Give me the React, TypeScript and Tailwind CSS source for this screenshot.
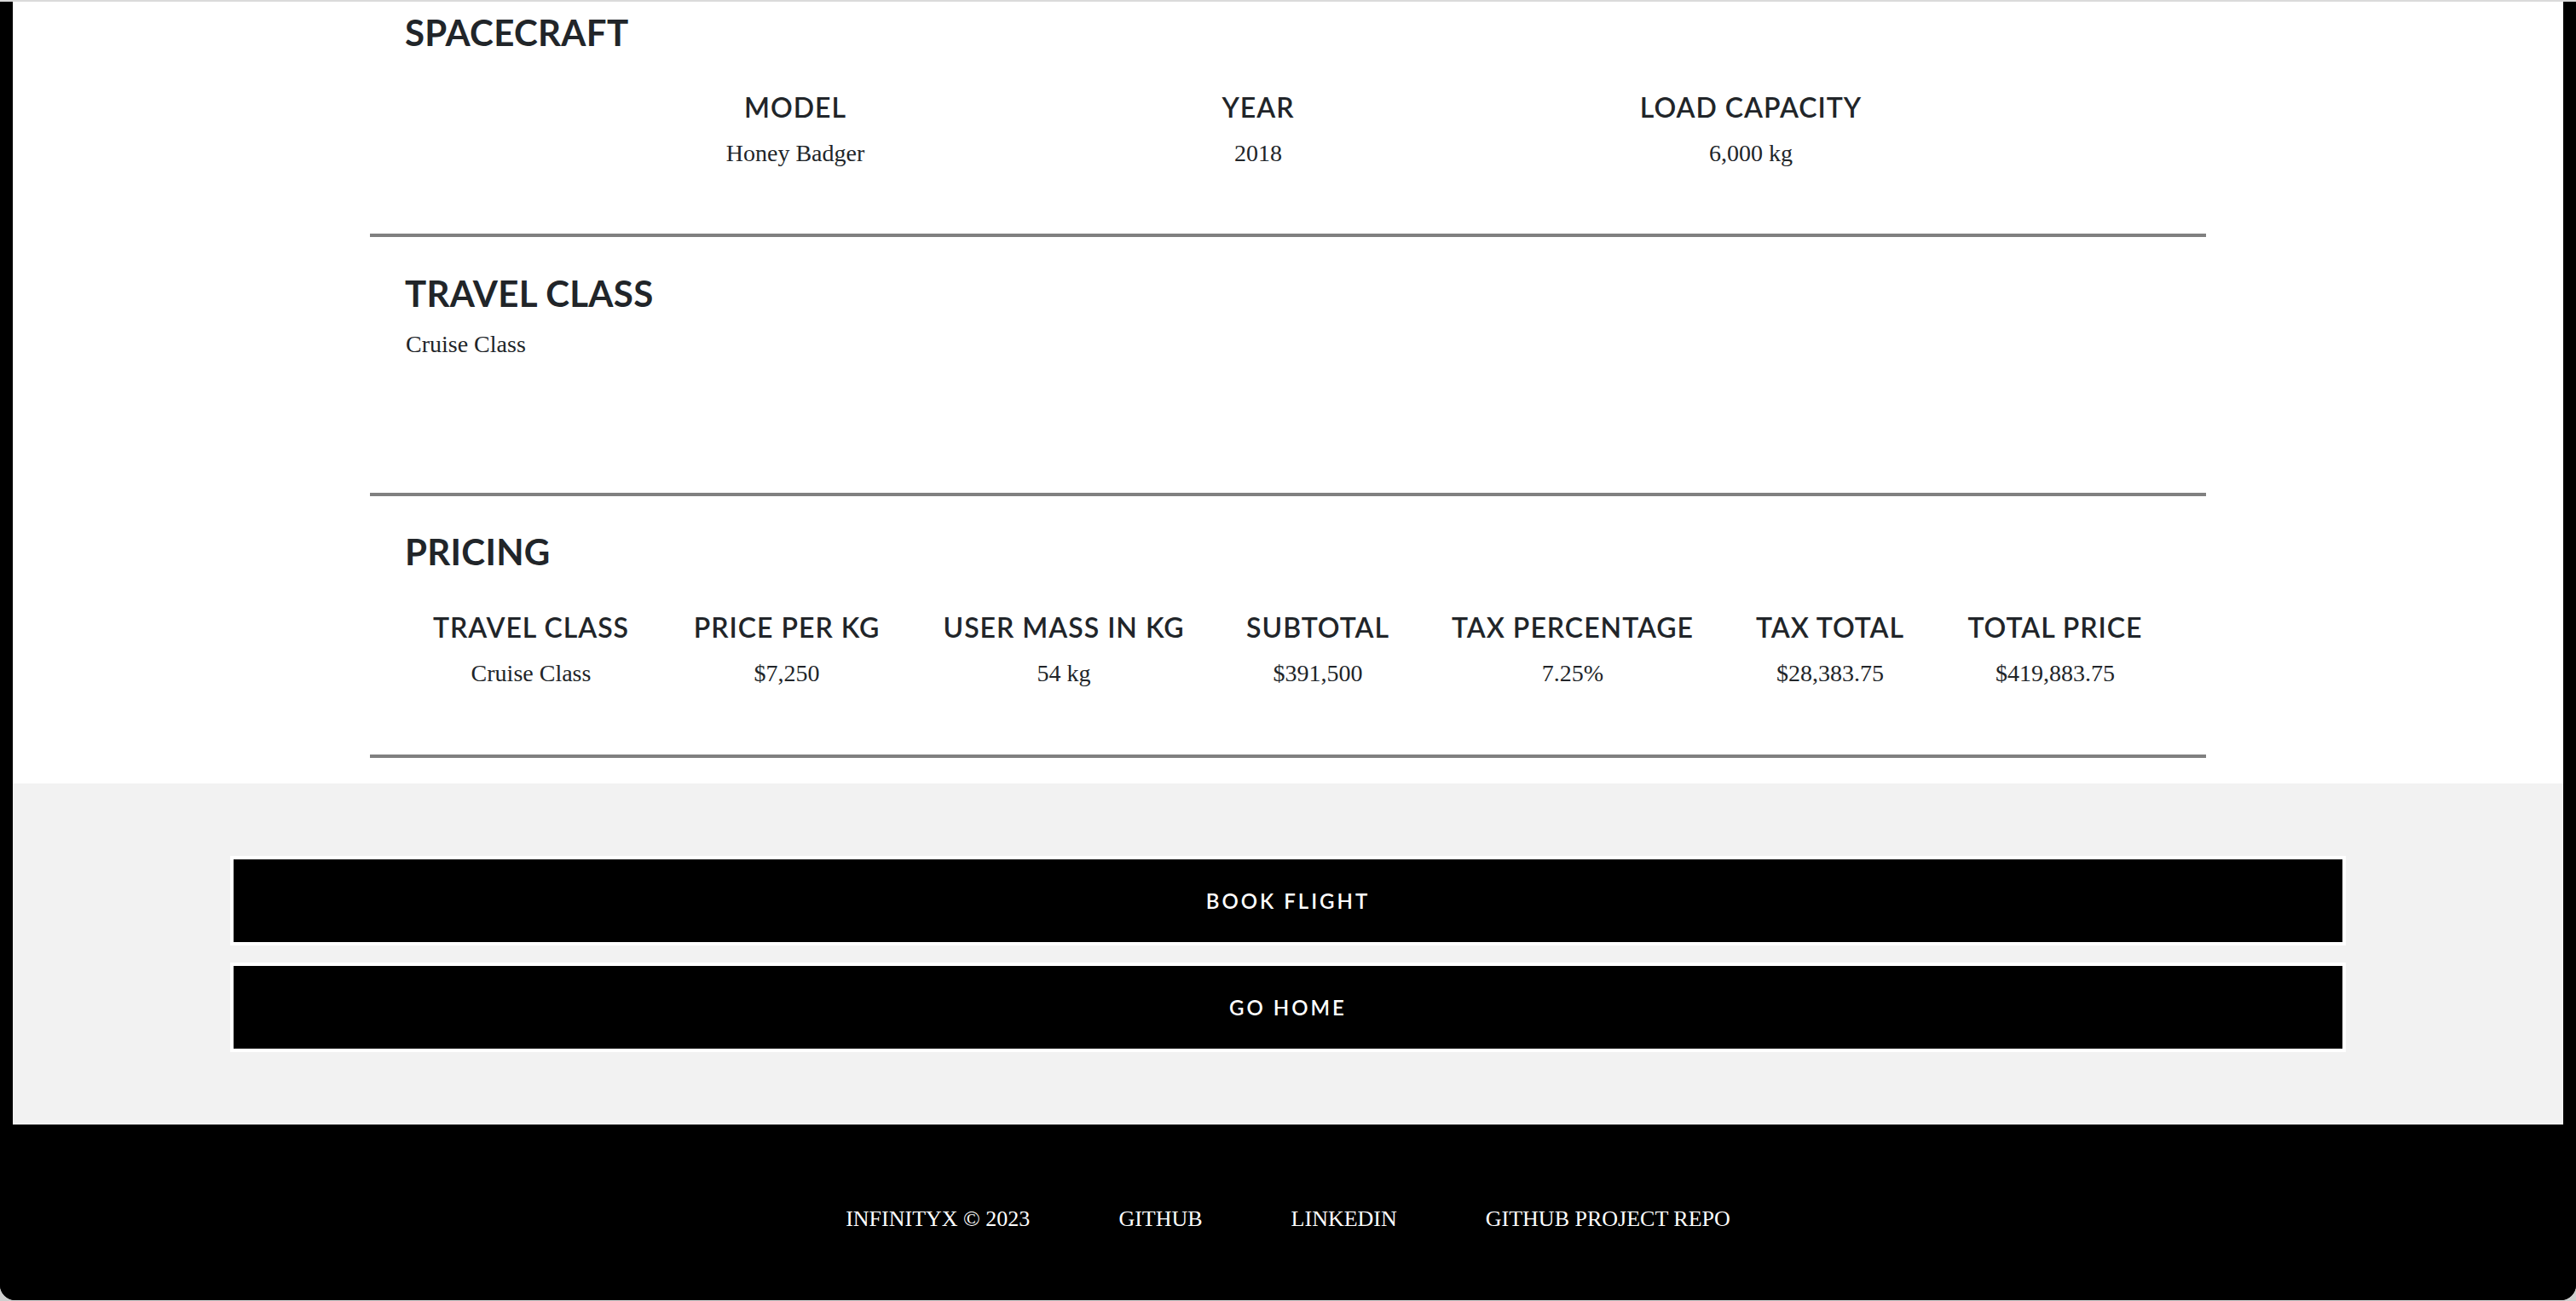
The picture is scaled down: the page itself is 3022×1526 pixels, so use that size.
import React from "react";

const sans = { fontFamily: "Lato, 'Noto Sans', sans-serif" };
const serif = { fontFamily: "'Liberation Serif', 'DejaVu Serif', serif" };

const specs = [
  { label: "MODEL", value: "Honey Badger", w: "w-[586px]" },
  { label: "YEAR", value: "2018", w: "w-[500px]" },
  { label: "LOAD CAPACITY", value: "6,000 kg", w: "w-[656px]" },
];

const pricing = [
  { label: "TRAVEL CLASS", value: "Cruise Class", w: "w-[280px]" },
  { label: "PRICE PER KG", value: "$7,250", w: "w-[320px]" },
  { label: "USER MASS IN KG", value: "54 kg", w: "w-[330px]" },
  { label: "SUBTOTAL", value: "$391,500", w: "w-[266px]" },
  { label: "TAX PERCENTAGE", value: "7.25%", w: "w-[332px]" },
  { label: "TAX TOTAL", value: "$28,383.75", w: "w-[272px]" },
  { label: "TOTAL PRICE", value: "$419,883.75", w: "w-[256px]" },
];

function SectionTitle({ children }: { children: React.ReactNode }) {
  return (
    <h2
      style={sans}
      className="h-[42px] pl-[41px] text-[42px] font-bold leading-none tracking-[0.3px] text-[#212529]"
    >
      {children}
    </h2>
  );
}

function Column({ label, value, w }: { label: string; value: string; w: string }) {
  return (
    <div className={`${w} flex flex-col items-center`}>
      <div
        style={sans}
        className="h-[32px] whitespace-nowrap text-[32px] font-semibold leading-none tracking-[1px] text-[#212529]"
      >
        {label}
      </div>
      <div
        style={serif}
        className="mt-[24px] h-[28px] whitespace-nowrap text-[28px] leading-none text-[#212529]"
      >
        {value}
      </div>
    </div>
  );
}

export default function App() {
  return (
    <div className="min-h-screen bg-[#cfcfcf]">
      <div className="overflow-hidden rounded-b-[18px] border-t-2 border-[#dadada] bg-black">
        <main className="mx-[15px] bg-white pb-[30px]">
          <div className="mx-auto w-[2154px]">
            {/* Spacecraft */}
            <section className="border-b-4 border-[#808080] pt-[15px] pb-[80px]">
              <SectionTitle>SPACECRAFT</SectionTitle>
              <div className="mt-[51px] flex justify-center">
                {specs.map((s) => (
                  <Column key={s.label} {...s} />
                ))}
              </div>
            </section>

            {/* Travel class */}
            <section className="border-b-4 border-[#808080] pt-[45px] pb-[160px]">
              <SectionTitle>TRAVEL CLASS</SectionTitle>
              <p
                style={serif}
                className="mt-[25px] h-[28px] pl-[42px] text-[28px] leading-none text-[#212529]"
              >
                Cruise Class
              </p>
            </section>

            {/* Pricing */}
            <section className="border-b-4 border-[#808080] pt-[44px] pb-[81px]">
              <SectionTitle>PRICING</SectionTitle>
              <div className="mt-[52px] flex justify-center">
                {pricing.map((p) => (
                  <Column key={p.label} {...p} />
                ))}
              </div>
            </section>
          </div>
        </main>

        <div className="mx-[15px] flex h-[400px] flex-col items-center gap-[20px] bg-[#f2f2f2] pt-[85px]">
          {["BOOK FLIGHT", "GO HOME"].map((t) => (
            <button
              key={t}
              style={sans}
              className="flex h-[105px] w-[2482px] items-center justify-center border-4 border-white bg-black text-[24px] font-semibold leading-none tracking-[3px] text-white"
            >
              {t}
            </button>
          ))}
        </div>

        <footer className="flex h-[206px] justify-center gap-[104px] bg-black pt-[98px]">
          {["INFINITYX © 2023", "GITHUB", "LINKEDIN", "GITHUB PROJECT REPO"].map((t) => (
            <span
              key={t}
              style={serif}
              className="h-[26px] text-[26px] leading-none text-white"
            >
              {t}
            </span>
          ))}
        </footer>
      </div>
    </div>
  );
}
